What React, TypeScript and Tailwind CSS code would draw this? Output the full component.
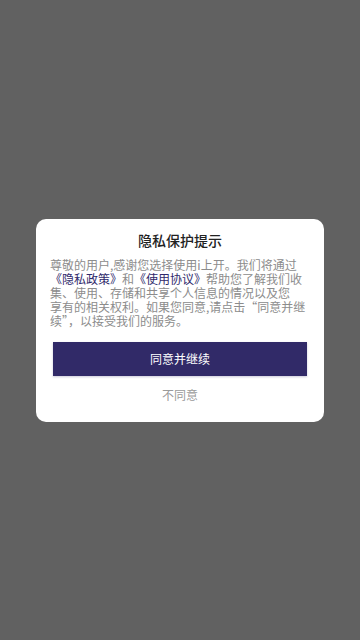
export default function App() {
  const font = { fontFamily: '"Noto Sans CJK SC", "Noto Sans", sans-serif' };
  return (
    <div
      className="flex h-[640px] w-full items-center justify-center bg-[#616161]"
      style={font}
    >
      <div className="w-[288px] rounded-[10px] bg-white px-[14px] pb-[17px] pt-[11px]">
        <h2 className="text-center text-[14px] font-medium leading-[20px] text-[#222]">
          隐私保护提示
        </h2>
        <p className="mt-[8px] whitespace-nowrap text-[12px] leading-[14px] text-[#8c8c8c]">
          尊敬的用户,感谢您选择使用i上开。我们将通过
          <br />
          <span className="text-[#2f2a6b]">《隐私政策》</span>和
          <span className="text-[#2f2a6b]">《使用协议》</span>帮助您了解我们收
          <br />
          集、使用、存储和共享个人信息的情况以及您
          <br />
          享有的相关权利。如果您同意,请点击“同意并继
          <br />
          续”，以接受我们的服务。
        </p>
        <button className="mx-[3px] mt-[14px] block h-[34px] w-[254px] bg-[#312a68] text-[12px] text-white shadow-[0_1px_2px_rgba(49,42,104,0.25)]">
          同意并继续
        </button>
        <div className="mt-[9px] text-center text-[12px] leading-[20px] text-[#9a9a9a]">
          不同意
        </div>
      </div>
    </div>
  );
}
